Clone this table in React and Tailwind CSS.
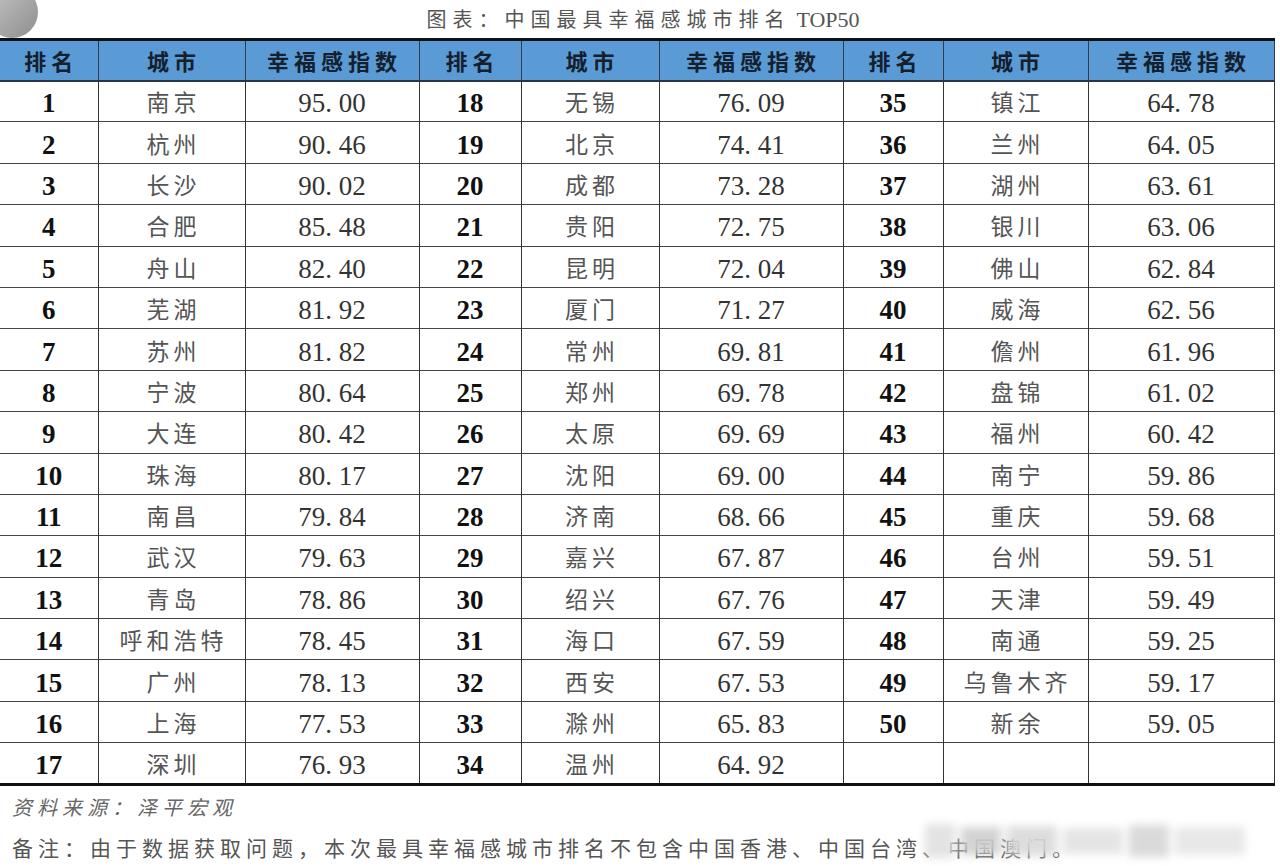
import React from "react";

const rows = [
  [1, "南京", "95. 00", 18, "无锡", "76. 09", 35, "镇江", "64. 78"],
  [2, "杭州", "90. 46", 19, "北京", "74. 41", 36, "兰州", "64. 05"],
  [3, "长沙", "90. 02", 20, "成都", "73. 28", 37, "湖州", "63. 61"],
  [4, "合肥", "85. 48", 21, "贵阳", "72. 75", 38, "银川", "63. 06"],
  [5, "舟山", "82. 40", 22, "昆明", "72. 04", 39, "佛山", "62. 84"],
  [6, "芜湖", "81. 92", 23, "厦门", "71. 27", 40, "威海", "62. 56"],
  [7, "苏州", "81. 82", 24, "常州", "69. 81", 41, "儋州", "61. 96"],
  [8, "宁波", "80. 64", 25, "郑州", "69. 78", 42, "盘锦", "61. 02"],
  [9, "大连", "80. 42", 26, "太原", "69. 69", 43, "福州", "60. 42"],
  [10, "珠海", "80. 17", 27, "沈阳", "69. 00", 44, "南宁", "59. 86"],
  [11, "南昌", "79. 84", 28, "济南", "68. 66", 45, "重庆", "59. 68"],
  [12, "武汉", "79. 63", 29, "嘉兴", "67. 87", 46, "台州", "59. 51"],
  [13, "青岛", "78. 86", 30, "绍兴", "67. 76", 47, "天津", "59. 49"],
  [14, "呼和浩特", "78. 45", 31, "海口", "67. 59", 48, "南通", "59. 25"],
  [15, "广州", "78. 13", 32, "西安", "67. 53", 49, "乌鲁木齐", "59. 17"],
  [16, "上海", "77. 53", 33, "滁州", "65. 83", 50, "新余", "59. 05"],
  [17, "深圳", "76. 93", 34, "温州", "64. 92", "", "", ""],
];

const widths = ["w-[98px]", "w-[147px]", "w-[174px]", "w-[102px]", "w-[138px]", "w-[184px]", "w-[100px]", "w-[145px]", "w-[186px]"];

const cjk = "font-['Noto_Sans_CJK_SC',sans-serif]";

// rank / city / score repeated three times across the row
const cellClass = (i) => {
  const kind = i % 3;
  if (kind === 0) return "font-['Liberation_Serif','Times_New_Roman',serif] font-bold text-[27px] text-[#111] pt-[5px]";
  if (kind === 1) return `${cjk} text-[23px] tracking-[4px] pl-[4px] pt-[1px] text-[#555]`;
  return "font-['Liberation_Serif','Times_New_Roman',serif] text-[27px] text-[#333] pt-[5px]";
};

export default function App() {
  return (
    <div className="relative w-[1280px] h-[866px] bg-white overflow-hidden">
      {/* avatar corner */}
      <div className="absolute -left-[14px] -top-[14px] w-[52px] h-[52px] rounded-full bg-gradient-to-br from-[#c8c8c8] to-[#8e8e8e]" />

      <div className={`h-[38px] flex items-center justify-center pl-[6px] ${cjk} text-[20px] tracking-[6px] text-[#555]`}>
        图表：中国最具幸福感城市排名<span className="font-['Liberation_Serif',serif] text-[22px] tracking-[0px] ml-[6px]">TOP50</span>
      </div>

      <table className="table-fixed border-collapse w-[1274px] border-t-[3px] border-b-[3px] border-t-[#111] border-b-[#111]">
        <colgroup>
          {widths.map((w, i) => (
            <col key={i} className={w} />
          ))}
        </colgroup>
        <thead>
          <tr className="h-[41px] bg-[#5b9bd5]">
            {["排名", "城市", "幸福感指数", "排名", "城市", "幸福感指数", "排名", "城市", "幸福感指数"].map((h, i) => (
              <th
                key={i}
                className={`${cjk} font-bold text-[22px] tracking-[5px] pl-[5px] text-[#14202e] border-b-[2px] border-b-[#2b3440] ${i > 0 ? "border-l-[1.5px] border-l-[#2f3d4d]" : ""} ${i === 8 ? "border-r-[1.5px] border-r-[#2f3d4d]" : ""}`}
              >
                {h}
              </th>
            ))}
          </tr>
        </thead>
        <tbody>
          {rows.map((r, ri) => (
            <tr key={ri} className="h-[41.4px]">
              {r.map((v, i) => (
                <td
                  key={i}
                  className={`text-center leading-none ${cellClass(i)} ${ri > 0 ? "border-t-[1.5px] border-t-[#444]" : ""} ${i > 0 ? "border-l-[1.5px] border-l-[#333]" : ""} ${i === 8 ? "border-r-[1.5px] border-r-[#333]" : ""}`}
                >
                  {v}
                </td>
              ))}
            </tr>
          ))}
        </tbody>
      </table>

      <div className={`pl-[12px] pt-[6px] ${cjk} italic text-[20px] tracking-[5px] text-[#666]`}>资料来源：泽平宏观</div>
      <div className={`pl-[12px] pt-[10px] ${cjk} text-[21px] tracking-[5px] text-[#555] whitespace-nowrap`}>
        备注：由于数据获取问题，本次最具幸福感城市排名不包含中国香港、中国台湾、中国澳门。
      </div>

      {/* blurred watermark */}
      <div className="absolute left-[925px] top-[816px] w-[330px] h-[50px] flex items-center gap-[6px] blur-[4px] opacity-90">
        <div className="w-[30px] h-[34px] bg-[#e0e0e0]" />
        <div className="w-[40px] h-[28px] bg-[#cfcfcf]" />
        <div className="w-[50px] h-[30px] bg-[#dadada]" />
        <div className="w-[60px] h-[26px] bg-[#e2e2e2]" />
        <div className="w-[40px] h-[32px] bg-[#d6d6d6]" />
        <div className="w-[70px] h-[28px] bg-[#e6e6e6]" />
      </div>
    </div>
  );
}
